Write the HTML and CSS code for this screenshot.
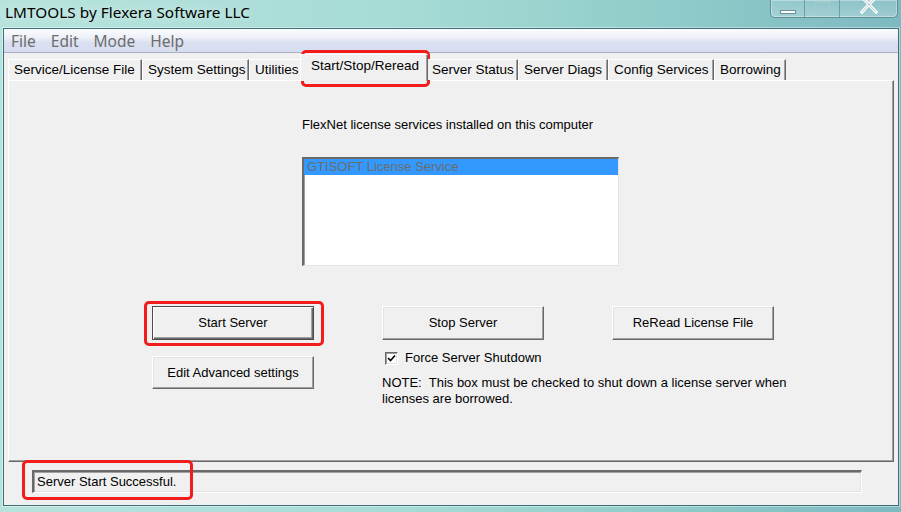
FILE: index.html
```html
<!DOCTYPE html>
<html>
<head>
<meta charset="utf-8">
<link rel="stylesheet" href="styles.css">
</head>
<body>
<div class="screen">
  <div class="titlebar">
    <div class="title">LMTOOLS by Flexera Software LLC</div>
    <div class="winbtns">
      <div class="wb wb-min"><span class="min-bar"></span></div>
      <div class="wb wb-max"><span class="max-box"></span></div>
      <div class="wb wb-close">
        <svg width="18" height="14" viewBox="0 0 18 14"><path d="M2 -3 L16 12 M16 -3 L2 12" stroke="#ffffff" stroke-width="3.2" stroke-linecap="square"/><path d="M2 -3 L16 12 M16 -3 L2 12" stroke="#8aa0a4" stroke-width="1" fill="none" opacity="0.6"/></svg>
      </div>
    </div>
  </div>
  <div class="window">
    <div class="menubar">
      <span class="menu-item">File</span>
      <span class="menu-item">Edit</span>
      <span class="menu-item">Mode</span>
      <span class="menu-item">Help</span>
    </div>
    <div class="client">
      <div class="tabs">
        <div class="tab t1">Service/License File</div>
        <div class="tab t2">System Settings</div>
        <div class="tab t3">Utilities</div>
        <div class="tab t4 active">Start/Stop/Reread</div>
        <div class="tab t5">Server Status</div>
        <div class="tab t6">Server Diags</div>
        <div class="tab t7">Config Services</div>
        <div class="tab t8">Borrowing</div>
      </div>
      <div class="panel">
        <div class="services">
          <div class="label">FlexNet license services installed on this computer</div>
          <div class="listbox">
            <div class="list-row selected">GTISOFT License Service</div>
          </div>
        </div>
        <div class="actions">
          <button class="btn default">Start Server</button>
          <button class="btn">Stop Server</button>
          <button class="btn">ReRead License File</button>
          <div class="col1">
            <button class="btn btn-small">Edit Advanced settings</button>
          </div>
          <div class="col23">
            <label class="check"><span class="box"><svg width="9" height="9" viewBox="0 0 9 9"><path d="M1 4 L3.5 6.5 L8 1.5" stroke="#000" stroke-width="1.6" fill="none"/></svg></span>Force Server Shutdown</label>
            <p class="note">NOTE:&nbsp; This box must be checked to shut down a license server when licenses are borrowed.</p>
          </div>
        </div>
      </div>
      <div class="statusrow">
        <div class="status">Server Start Successful.</div>
      </div>
    </div>
  </div>
  <div class="mark mark-tab"></div>
  <div class="mark mark-start"></div>
  <div class="mark mark-status"></div>
</div>
</body>
</html>
```
FILE: styles.css
```css
* { box-sizing: border-box; }
html, body { margin: 0; padding: 0; }
body {
  width: 901px;
  height: 512px;
  overflow: hidden;
  background: #8ccac8;
}
.screen {
  position: relative;
  width: 901px;
  height: 512px;
  display: flex;
  flex-direction: column;
  background: linear-gradient(90deg, #b8e3dd 0%, #a6dbd5 45%, #8fcbc9 75%, #7db9c1 100%);
}
.titlebar {
  height: 28px;
  display: flex;
  justify-content: space-between;
  align-items: flex-start;
  padding-left: 5px;
}
.title {
  font-family: "Noto Sans", sans-serif;
  font-size: 15.3px;
  letter-spacing: 0.05px;
  line-height: 24px;
  color: #000;
  text-shadow: 0 0 8px rgba(255,255,255,0.7);
}
.winbtns {
  display: flex;
  margin-right: 3px;
  height: 18px;
  border: 1px solid #5e8f96;
  border-top: none;
  border-radius: 0 0 5px 5px;
  background: linear-gradient(180deg, rgba(255,255,255,0.1), rgba(255,255,255,0.25));
  box-shadow: inset 0 0 0 1px rgba(255,255,255,0.35);
  overflow: hidden;
}
.wb {
  height: 17px;
  display: flex;
  align-items: center;
  justify-content: center;
}
.wb-min { width: 34px; border-right: 1px solid #6e9fa5; }
.wb-max { width: 35px; border-right: 1px solid #6e9fa5; }
.wb-close { width: 57px; align-items: flex-start; }
.min-bar {
  display: block;
  width: 16px;
  height: 4px;
  margin-top: 6px;
  background: #fff;
  border: 1px solid #6a8f95;
}
.max-box {
  display: block;
  width: 15px;
  height: 9px;
  margin-top: -6px;
  border: 1px solid #a4ccca;
  border-top-width: 2px;
  opacity: 0.8;
}
.window {
  flex: 1;
  margin: 0 2px 6px 3px;
  border: 1px solid #3f6f78;
  box-shadow: 0 0 0 1px rgba(255,255,255,0.4);
  display: flex;
  flex-direction: column;
  background: #f0f0f0;
}
.menubar {
  height: 24px;
  display: flex;
  align-items: center;
  padding-left: 7px;
  background: linear-gradient(180deg, #fbfcfe 0%, #eef1f8 35%, #dae0f1 60%, #d6ddf0 100%);
  border-bottom: 1px solid #a9b0c0;
  font-family: "Noto Sans", sans-serif;
  font-size: 15.5px;
  color: #6d6d6d;
}
.menu-item { margin-right: 15px; }
.client {
  flex: 1;
  display: flex;
  flex-direction: column;
  padding: 0 4px 0 4px;
  font-family: "Liberation Sans", Arial, sans-serif;
  font-size: 13px;
  color: #000;
}
.tabs {
  height: 27px;
  display: flex;
  align-items: flex-end;
  position: relative;
  z-index: 2;
}
.tab {
  height: 21px;
  line-height: 20px;
  padding-left: 5px;
  border-left: 1px solid #fff;
  border-top: 1px solid #fff;
  border-right: 1px solid #696969;
  box-shadow: inset -1px 0 0 #a0a0a0;
  white-space: nowrap;
  font-size: 13.5px;
  background: #f0f0f0;
}
.t1 { width: 134px; }
.t2 { width: 107px; }
.t3 { width: 53px; }
.t4 { width: 128px; }
.t5 { width: 92px; }
.t6 { width: 90px; }
.t7 { width: 106px; }
.t8 { width: 72px; }
.tab.active {
  height: 27px;
  line-height: 22px;
  margin: 0 -2px -1px -2px;
  padding-left: 10px;
  padding-bottom: 2px;
  position: relative;
  z-index: 3;
}
.panel {
  height: 382px;
  border-top: 1px solid #fff;
  border-left: 1px solid #fff;
  border-right: 1px solid #696969;
  border-bottom: 1px solid #696969;
  box-shadow: inset -1px -1px 0 #a0a0a0;
  display: flex;
  flex-direction: column;
  padding: 36px 0 0 293px;
}
.services { display: flex; flex-direction: column; }
.label { line-height: 16px; }
.listbox {
  margin-top: 24px;
  width: 317px;
  height: 109px;
  background: #fff;
  border-top: 2px solid #696969;
  border-left: 2px solid #696969;
  border-right: 1px solid #e3e3e3;
  border-bottom: 1px solid #e3e3e3;
  box-shadow: inset 1px 1px 0 #a0a0a0;
}
.list-row {
  height: 16px;
  line-height: 16px;
  padding-left: 3px;
  font-size: 13px;
}
.list-row.selected { background: #3399ff; color: #6c6c6c; }
.actions {
  margin-top: 40px;
  margin-left: -150px;
  display: grid;
  grid-template-columns: 162px 162px 162px;
  column-gap: 68px;
  row-gap: 16px;
  align-items: start;
}
.btn {
  font-family: "Liberation Sans", Arial, sans-serif;
  font-size: 13px;
  color: #000;
  height: 34px;
  width: 162px;
  background: #f0f0f0;
  border-top: 1px solid #fff;
  border-left: 1px solid #fff;
  border-right: 1px solid #696969;
  border-bottom: 1px solid #696969;
  box-shadow: inset -1px -1px 0 #a0a0a0, inset 1px 1px 0 #e3e3e3;
  padding: 0 0 1px 0;
  margin: 0;
}
.btn.default {
  border: 1px solid #4a4a4a;
  box-shadow: inset 1px 1px 0 #fff, inset -1px -1px 0 #696969, inset -2px -2px 0 #a0a0a0;
}
.btn-small { height: 33px; }
.col23 {
  grid-column: 2 / span 2;
  margin-top: -5px;
}
.check {
  display: flex;
  align-items: center;
  height: 14px;
  margin-left: 3px;
  line-height: 14px;
}
.box {
  width: 13px;
  height: 13px;
  background: #fff;
  border-top: 1px solid #696969;
  border-left: 1px solid #696969;
  border-right: 1px solid #fff;
  border-bottom: 1px solid #fff;
  box-shadow: inset 1px 1px 0 #a0a0a0, inset -1px -1px 0 #e3e3e3;
  display: flex;
  align-items: center;
  justify-content: center;
  margin-right: 7px;
}
.box svg { display: block; }
.note {
  margin: 10px 0 0 0;
  width: 420px;
  line-height: 16px;
}
.statusrow {
  flex: 1;
  padding: 8px 32px 0 24px;
}
.status {
  height: 23px;
  line-height: 19px;
  padding-left: 3px;
  border-top: 2px solid #696969;
  border-left: 2px solid #696969;
  border-right: 1px solid #fff;
  border-bottom: 1px solid #fff;
  box-shadow: inset 1px 1px 0 #a0a0a0, inset -1px -1px 0 #e3e3e3;
}
.mark {
  position: absolute;
  border: 3px solid #f21c1c;
  border-radius: 5px;
}
.mark-tab { left: 301px; top: 50px; width: 129px; height: 37px; }
.mark-start { left: 144px; top: 301px; width: 180px; height: 45px; }
.mark-status { left: 22px; top: 460px; width: 171px; height: 40px; }
```
